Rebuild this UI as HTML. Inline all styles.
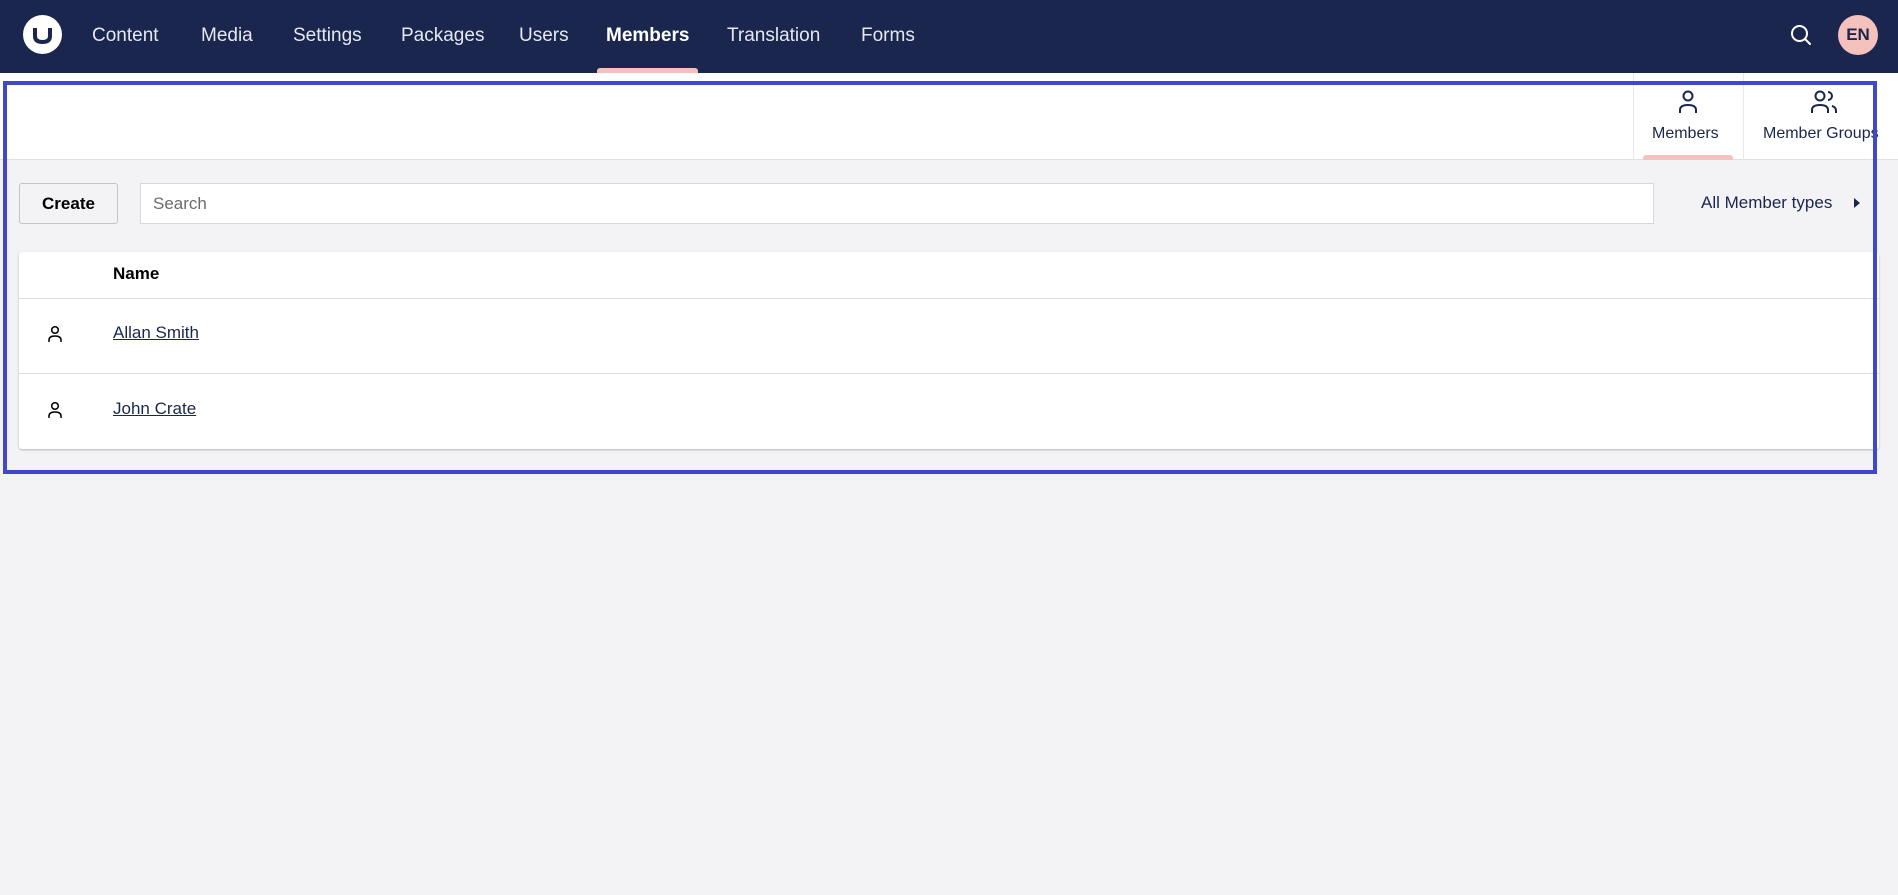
<!DOCTYPE html>
<html><head><meta charset="utf-8"><style>
*{box-sizing:border-box;margin:0;padding:0}
body{width:1898px;height:895px;overflow:hidden;background:#f3f3f5;font-family:"Liberation Sans",sans-serif;color:#1b264f;position:relative}
.hdr{position:absolute;left:0;top:0;width:1898px;height:73px;background:#1b264f}
.nav{position:absolute;top:25px;font-size:19px;color:#e6e8ef}
.abs{position:absolute}
.sub{position:absolute;left:0;top:73px;width:1898px;height:87px;background:#fff;border-bottom:1px solid #e0e0e0}
.tablbl{position:absolute;top:125px;font-size:16px;color:#1b264f}
.card{position:absolute;left:19px;top:252px;width:1860px;height:197px;background:#fff;border-radius:3px;box-shadow:0 1px 2px rgba(0,0,0,.25)}
.row{position:absolute;left:0;width:100%;border-top:1px solid #dcdcdc}
a{color:#1b264f;text-decoration:underline;font-size:17px}
</style></head><body>
<div class="hdr"></div>
<svg class="abs" style="left:23px;top:15px" width="39" height="39" viewBox="0 0 39 39"><circle cx="19.5" cy="19.5" r="19.5" fill="#fff"/><path d="M12 13 v8 q0 6 7.5 6 q7.5 0 7.5-6 v-8" fill="none" stroke="#1b264f" stroke-width="4"/></svg>
<div class="nav" style="left:92px">Content</div>
<div class="nav" style="left:201px">Media</div>
<div class="nav" style="left:293px">Settings</div>
<div class="nav" style="left:401px">Packages</div>
<div class="nav" style="left:519px">Users</div>
<div class="nav" style="left:606px;color:#fff;font-weight:bold">Members</div>
<div class="nav" style="left:727px">Translation</div>
<div class="nav" style="left:861px">Forms</div>
<div class="abs" style="left:597px;top:68px;width:101px;height:5px;background:#f5c1bc;border-radius:3px 3px 0 0"></div>
<svg class="abs" style="left:1789px;top:23px" width="24" height="24" viewBox="0 0 24 24"><circle cx="10.5" cy="10.5" r="7.5" fill="none" stroke="#fff" stroke-width="2"/><path d="M16 16l5 5" stroke="#fff" stroke-width="2" stroke-linecap="round"/></svg>
<div class="abs" style="left:1838px;top:15px;width:40px;height:40px;border-radius:50%;background:#f5c1bc;color:#1b264f;font-size:17px;font-weight:bold;text-align:center;line-height:40px">EN</div>
<div class="sub"></div>
<div class="abs" style="left:1633px;top:73px;width:1px;height:87px;background:#e8e8e8"></div>
<div class="abs" style="left:1743px;top:73px;width:1px;height:87px;background:#e8e8e8"></div>
<svg class="abs" style="left:1675px;top:89px" width="26" height="26" viewBox="0 0 26 26"><circle cx="13" cy="7" r="4.5" fill="none" stroke="#1b264f" stroke-width="2"/><path d="M5 24v-3q0-5 8-5q8 0 8 5v3" fill="none" stroke="#1b264f" stroke-width="2"/></svg>
<div class="tablbl" style="left:1652px">Members</div>
<div class="abs" style="left:1643px;top:155px;width:90px;height:5px;background:#f5c1bc;border-radius:3px 3px 0 0"></div>
<svg class="abs" style="left:1810px;top:89px" width="28" height="26" viewBox="0 0 28 26"><circle cx="10" cy="7" r="4.5" fill="none" stroke="#1b264f" stroke-width="2"/><path d="M2 24v-3q0-5 8-5q8 0 8 5v3M18 3a4 4 0 0 1 0 8M22 17q4 1 4 5v2" fill="none" stroke="#1b264f" stroke-width="2"/></svg>
<div class="tablbl" style="left:1763px">Member Groups</div>
<div class="abs" style="left:19px;top:183px;width:99px;height:41px;background:#f3f3f5;border:1px solid #c4c4c4;border-radius:3px;font-size:17px;font-weight:bold;text-align:center;line-height:39px;color:#000">Create</div>
<div class="abs" style="left:140px;top:183px;width:1514px;height:41px;background:#fff;border:1px solid #d8d8d8;font-size:17px;line-height:39px;padding-left:12px;color:#6b6b6b">Search</div>
<div class="abs" style="left:1701px;top:193px;font-size:17px;color:#1b264f">All Member types</div>
<svg class="abs" style="left:1852px;top:197px" width="10" height="12" viewBox="0 0 10 12"><path d="M2 1l6 5l-6 5z" fill="#1b264f"/></svg>
<div class="card">
<div class="abs" style="left:94px;top:12px;font-size:17px;font-weight:bold;color:#000">Name</div>
<div class="row" style="top:46px;height:76px"></div>
<div class="row" style="top:121px;height:76px"></div>
<svg class="abs" style="left:28px;top:73px" width="16" height="18" viewBox="0 0 16 18"><circle cx="8" cy="5" r="3.3" fill="none" stroke="#000" stroke-width="1.5"/><path d="M2 17v-2q0-4 6-4q6 0 6 4v2" fill="none" stroke="#000" stroke-width="1.5"/></svg>
<a class="abs" style="left:94px;top:71px">Allan Smith</a>
<svg class="abs" style="left:28px;top:149px" width="16" height="18" viewBox="0 0 16 18"><circle cx="8" cy="5" r="3.3" fill="none" stroke="#000" stroke-width="1.5"/><path d="M2 17v-2q0-4 6-4q6 0 6 4v2" fill="none" stroke="#000" stroke-width="1.5"/></svg>
<a class="abs" style="left:94px;top:147px">John Crate</a>
</div>
<div class="abs" style="left:3px;top:81px;width:1874px;height:393px;border:4px solid #3f48cc"></div>
</body></html>
